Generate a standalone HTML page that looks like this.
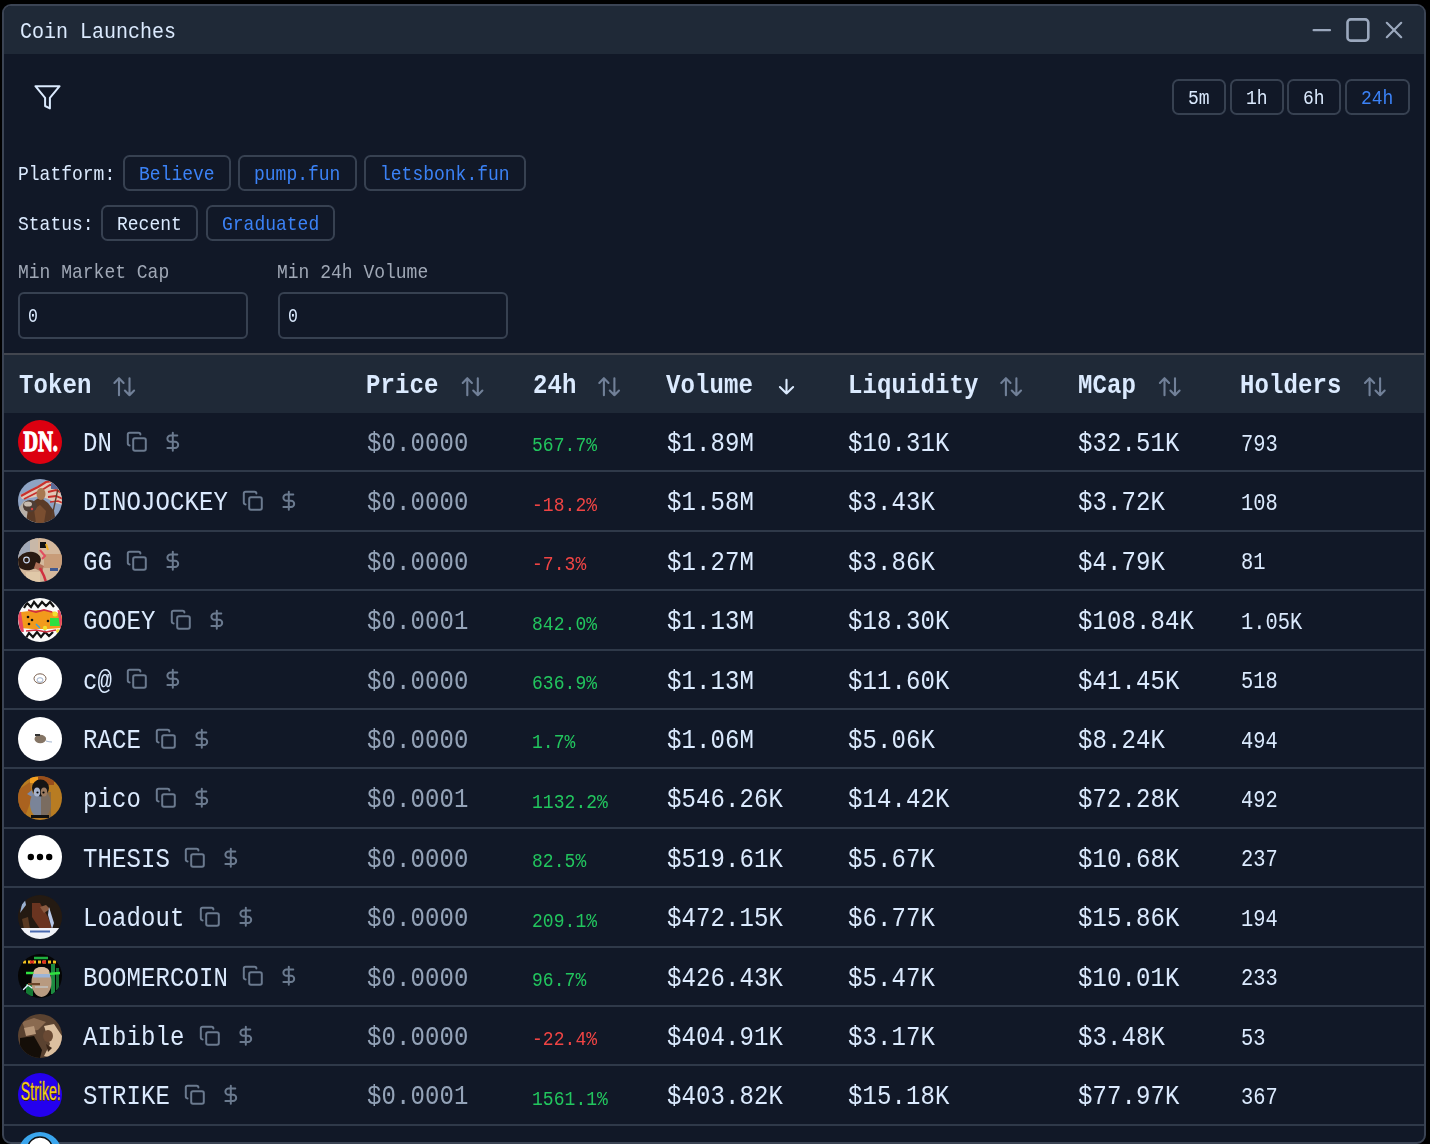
<!DOCTYPE html>
<html><head><meta charset="utf-8"><title>Coin Launches</title>
<style>
html,body{margin:0;padding:0}
body{width:1430px;height:1144px;background:#000;position:relative;overflow:hidden;font-family:"Liberation Mono",monospace}
.win{position:absolute;left:2px;top:4px;width:1420px;height:1136px;border:2px solid #3b4454;border-radius:9px;background:#111827;overflow:hidden}
.bar{position:absolute;left:0;top:0;width:100%;height:48px;background:#1f2937}
.abs{position:absolute}
.t{position:absolute;white-space:pre;line-height:1;transform-origin:0 76.61%;will-change:transform}
.btn{position:absolute;box-sizing:border-box;border:2px solid #374151;border-radius:6.5px}
.inp{position:absolute;box-sizing:border-box;border:2px solid #374151;border-radius:6px}

.av{position:absolute;width:44px;height:44px;border-radius:50%;overflow:hidden}
.av svg{display:block}

</style></head><body>
<div class="win"><div class="bar"></div></div>
<span class="t" style="left:19.90px;top:22.98px;font-size:20px;color:#dbeafe;transform:scaleY(1.13);">Coin Launches</span><svg class="abs" style="left:0;top:0" width="1430" height="60" viewBox="0 0 1430 60">
<g fill="none" stroke="#9ba8bd" stroke-linecap="round" stroke-linejoin="round">
<line x1="1313.6" y1="30.2" x2="1330" y2="30.2" stroke-width="2.2"/>
<rect x="1347.5" y="19.4" width="20.8" height="21.2" rx="3.2" stroke-width="2.6"/>
<line x1="1386.8" y1="22.8" x2="1401.2" y2="37.2" stroke-width="2.2"/>
<line x1="1401.2" y1="22.8" x2="1386.8" y2="37.2" stroke-width="2.2"/>
</g></svg><svg class="abs" style="left:0;top:60px" width="100" height="70" viewBox="0 60 100 70">
<path d="M59.6 86.2 H35.4 L45.1 97.9 V106 L49.9 108.4 V97.9 Z" fill="none" stroke="#dbeafe" stroke-width="2" stroke-linejoin="round"/>
</svg><div class="btn" style="left:1172px;top:79px;width:54px;height:36px;"></div><span class="t" style="left:1188.20px;top:90.41px;font-size:18px;color:#dbeafe;transform:scaleY(1.13);">5m</span><div class="btn" style="left:1230px;top:79px;width:54px;height:36px;"></div><span class="t" style="left:1246.20px;top:90.41px;font-size:18px;color:#dbeafe;transform:scaleY(1.13);">1h</span><div class="btn" style="left:1287.2px;top:79px;width:53.6px;height:36px;"></div><span class="t" style="left:1303.20px;top:90.41px;font-size:18px;color:#dbeafe;transform:scaleY(1.13);">6h</span><div class="btn" style="left:1345px;top:79px;width:65px;height:36px;"></div><span class="t" style="left:1361.30px;top:90.41px;font-size:18px;color:#3b82f6;transform:scaleY(1.13);">24h</span><span class="t" style="left:18.00px;top:166.11px;font-size:18px;color:#dbeafe;transform:scaleY(1.13);">Platform:</span><div class="btn" style="left:123px;top:155px;width:107.6px;height:36px;"></div><span class="t" style="left:139.00px;top:165.71px;font-size:18px;color:#3b82f6;transform:scaleY(1.13);">Believe</span><div class="btn" style="left:238px;top:155px;width:118.8px;height:36px;"></div><span class="t" style="left:254.20px;top:165.71px;font-size:18px;color:#3b82f6;transform:scaleY(1.13);">pump.fun</span><div class="btn" style="left:364.4px;top:155px;width:161.6px;height:36px;"></div><span class="t" style="left:380.40px;top:165.71px;font-size:18px;color:#3b82f6;transform:scaleY(1.13);">letsbonk.fun</span><span class="t" style="left:18.00px;top:215.81px;font-size:18px;color:#dbeafe;transform:scaleY(1.13);">Status:</span><div class="btn" style="left:101.2px;top:205px;width:96.6px;height:36px;"></div><span class="t" style="left:117.10px;top:215.81px;font-size:18px;color:#dbeafe;transform:scaleY(1.13);">Recent</span><div class="btn" style="left:206px;top:205px;width:129px;height:36px;"></div><span class="t" style="left:221.90px;top:215.81px;font-size:18px;color:#3b82f6;transform:scaleY(1.13);">Graduated</span><span class="t" style="left:18.00px;top:264.01px;font-size:18px;color:#a0a8b6;transform:scaleY(1.13);">Min Market Cap</span><span class="t" style="left:277.00px;top:264.01px;font-size:18px;color:#a0a8b6;transform:scaleY(1.13);">Min 24h Volume</span><div class="inp" style="left:18px;top:292px;width:230px;height:47px"></div><div class="inp" style="left:278px;top:292px;width:230px;height:47px"></div><span class="t" style="left:28.30px;top:310.36px;font-size:16.5px;color:#dbeafe;transform:scaleY(1.28);">0</span><span class="t" style="left:287.70px;top:310.36px;font-size:16.5px;color:#dbeafe;transform:scaleY(1.28);">0</span><div class="abs" style="left:4px;top:353px;width:1420px;height:2px;background:#42464f"></div><div class="abs" style="left:4px;top:355px;width:1420px;height:58px;background:#1f2937"></div><span class="t" style="left:18.50px;top:374.81px;font-size:24px;color:#dbeafe;font-weight:bold;letter-spacing:0.1px;transform:scaleY(1.13);">Token</span><span class="t" style="left:365.90px;top:374.81px;font-size:24px;color:#dbeafe;font-weight:bold;letter-spacing:0.1px;transform:scaleY(1.13);">Price</span><span class="t" style="left:533.00px;top:374.81px;font-size:24px;color:#dbeafe;font-weight:bold;letter-spacing:0.1px;transform:scaleY(1.13);">24h</span><span class="t" style="left:665.70px;top:374.81px;font-size:24px;color:#dbeafe;font-weight:bold;letter-spacing:0.1px;transform:scaleY(1.13);">Volume</span><span class="t" style="left:847.50px;top:374.81px;font-size:24px;color:#dbeafe;font-weight:bold;letter-spacing:0.1px;transform:scaleY(1.13);">Liquidity</span><span class="t" style="left:1077.60px;top:374.81px;font-size:24px;color:#dbeafe;font-weight:bold;letter-spacing:0.1px;transform:scaleY(1.13);">MCap</span><span class="t" style="left:1240.10px;top:374.81px;font-size:24px;color:#dbeafe;font-weight:bold;letter-spacing:0.1px;transform:scaleY(1.13);">Holders</span><svg class="abs" style="left:0;top:360px" width="1430" height="50" viewBox="0 360 1430 50"><g fill="none" stroke="#718098" stroke-width="2.1" stroke-linecap="round" stroke-linejoin="round"><path d="M114.40 382.9 L119.00 378.2 L123.60 382.9 M119.00 378.2 V395.2 M124.90 390.5 L129.50 395.2 L134.10 390.5 M129.50 395.2 V378.2"/><path d="M462.70 382.9 L467.30 378.2 L471.90 382.9 M467.30 378.2 V395.2 M473.20 390.5 L477.80 395.2 L482.40 390.5 M477.80 395.2 V378.2"/><path d="M599.30 382.9 L603.90 378.2 L608.50 382.9 M603.90 378.2 V395.2 M609.80 390.5 L614.40 395.2 L619.00 390.5 M614.40 395.2 V378.2"/><path d="M1001.30 382.9 L1005.90 378.2 L1010.50 382.9 M1005.90 378.2 V395.2 M1011.80 390.5 L1016.40 395.2 L1021.00 390.5 M1016.40 395.2 V378.2"/><path d="M1159.90 382.9 L1164.50 378.2 L1169.10 382.9 M1164.50 378.2 V395.2 M1170.40 390.5 L1175.00 395.2 L1179.60 390.5 M1175.00 395.2 V378.2"/><path d="M1365.00 382.9 L1369.60 378.2 L1374.20 382.9 M1369.60 378.2 V395.2 M1375.50 390.5 L1380.10 395.2 L1384.70 390.5 M1380.10 395.2 V378.2"/></g><path d="M786.5 379.9 V393.5 M779.9 387.1 L786.5 393.5 L793.1 387.1" fill="none" stroke="#dbeafe" stroke-width="2.1" stroke-linecap="round" stroke-linejoin="round"/></svg><div class="abs" style="left:4px;top:470.40px;width:1420px;height:2px;background:#2f3949"></div><div class="av av-dn" style="left:18px;top:419.50px"><svg width="44" height="44" viewBox="0 0 44 44"><rect width="44" height="44" fill="#dc0010"/><text x="5.6" y="31.1" font-family="Liberation Serif" font-weight="bold" font-size="28.5" fill="#fff" stroke="#fff" stroke-width="1.4" textLength="34.2" lengthAdjust="spacingAndGlyphs">DN.</text></svg></div><span class="t" style="left:82.60px;top:432.91px;font-size:24px;color:#dbeafe;letter-spacing:0.1px;transform:scaleY(1.13);">DN</span><svg class="abs" style="left:126.00px;top:430.70px" width="21.6" height="21.6" viewBox="0 0 24 24" fill="none" stroke="#6b7a8f" stroke-width="2.2" stroke-linecap="round" stroke-linejoin="round"><rect width="14" height="14" x="8" y="8" rx="2" ry="2"/><path d="M4 16c-1.1 0-2-.9-2-2V4c0-1.1.9-2 2-2h10c1.1 0 2 .9 2 2"/></svg><svg class="abs" style="left:162.00px;top:430.70px" width="21.6" height="21.6" viewBox="0 0 24 24" fill="none" stroke="#6b7a8f" stroke-width="2.2" stroke-linecap="round" stroke-linejoin="round"><line x1="12" x2="12" y1="2" y2="22"/><path d="M17 5H9.5a3.5 3.5 0 0 0 0 7h5a3.5 3.5 0 0 1 0 7H6"/></svg><span class="t" style="left:366.60px;top:432.91px;font-size:24px;color:#94a3b8;letter-spacing:0.1px;transform:scaleY(1.13);">$0.0000</span><span class="t" style="left:532.40px;top:437.31px;font-size:18px;color:#22c55e;letter-spacing:0.05px;transform:scaleY(1.1);">567.7%</span><span class="t" style="left:666.70px;top:432.91px;font-size:24px;color:#dbeafe;letter-spacing:0.1px;transform:scaleY(1.13);">$1.89M</span><span class="t" style="left:847.70px;top:432.91px;font-size:24px;color:#dbeafe;letter-spacing:0.1px;transform:scaleY(1.13);">$10.31K</span><span class="t" style="left:1078.30px;top:432.91px;font-size:24px;color:#dbeafe;letter-spacing:0.1px;transform:scaleY(1.13);">$32.51K</span><span class="t" style="left:1240.60px;top:435.67px;font-size:20.4px;color:#dbeafe;letter-spacing:0.0px;transform:scaleY(1.13);">793</span><div class="abs" style="left:4px;top:529.80px;width:1420px;height:2px;background:#2f3949"></div><div class="av av-dino" style="left:18px;top:478.90px"><svg width="44" height="44" viewBox="0 0 44 44"><rect width="44" height="44" fill="#8ea3c4"/><path d="M0 30 L6 22 L14 24 L20 30 L24 44 L0 44 Z" fill="#b8b0a8"/>
<path d="M2 16 L10 12 L18 8 L26 3 L34 1 L40 5 L45 9 L45 26 L38 24 L30 20 L22 17 L12 19 L4 20 Z" fill="#e0c8b8"/>
<path d="M3 17 L12 12 L20 8 L28 3 L35 2" stroke="#c8302c" stroke-width="2.2" fill="none"/>
<path d="M6 20 L16 15 L24 11 L32 6 L38 6" stroke="#c8302c" stroke-width="1.8" fill="none"/>
<path d="M30 13 L38 11 L45 14" stroke="#c8302c" stroke-width="2" fill="none"/>
<path d="M30 18 L38 17 L45 20" stroke="#c8302c" stroke-width="1.8" fill="none"/>
<path d="M32 23 L40 22 L45 24" stroke="#c8302c" stroke-width="1.6" fill="none"/>
<rect x="33" y="4" width="8" height="6" fill="#5a6a98"/>
<path d="M8 44 L10 30 L16 22 L22 18 L30 24 L36 32 L38 44 Z" fill="#5a3a26"/>
<path d="M16 30 L22 26 L28 32 L26 44 L18 44 Z" fill="#7a4e30"/>
<ellipse cx="23" cy="15" rx="4.5" ry="6" fill="#a87850"/>
<ellipse cx="12" cy="27" rx="7" ry="6" fill="#4e3e36"/>
<ellipse cx="10" cy="25" rx="4" ry="2.6" fill="#c8bcb0"/>
<circle cx="14" cy="30" r="1.2" fill="#d04040"/>
<rect x="36" y="10" width="1.4" height="30" fill="#5a4030" transform="rotate(12 36 25)"/></svg></div><span class="t" style="left:82.60px;top:492.31px;font-size:24px;color:#dbeafe;letter-spacing:0.1px;transform:scaleY(1.13);">DINOJOCKEY</span><svg class="abs" style="left:242.00px;top:490.10px" width="21.6" height="21.6" viewBox="0 0 24 24" fill="none" stroke="#6b7a8f" stroke-width="2.2" stroke-linecap="round" stroke-linejoin="round"><rect width="14" height="14" x="8" y="8" rx="2" ry="2"/><path d="M4 16c-1.1 0-2-.9-2-2V4c0-1.1.9-2 2-2h10c1.1 0 2 .9 2 2"/></svg><svg class="abs" style="left:278.00px;top:490.10px" width="21.6" height="21.6" viewBox="0 0 24 24" fill="none" stroke="#6b7a8f" stroke-width="2.2" stroke-linecap="round" stroke-linejoin="round"><line x1="12" x2="12" y1="2" y2="22"/><path d="M17 5H9.5a3.5 3.5 0 0 0 0 7h5a3.5 3.5 0 0 1 0 7H6"/></svg><span class="t" style="left:366.60px;top:492.31px;font-size:24px;color:#94a3b8;letter-spacing:0.1px;transform:scaleY(1.13);">$0.0000</span><span class="t" style="left:532.40px;top:496.71px;font-size:18px;color:#ef4444;letter-spacing:0.05px;transform:scaleY(1.1);">-18.2%</span><span class="t" style="left:666.70px;top:492.31px;font-size:24px;color:#dbeafe;letter-spacing:0.1px;transform:scaleY(1.13);">$1.58M</span><span class="t" style="left:847.70px;top:492.31px;font-size:24px;color:#dbeafe;letter-spacing:0.1px;transform:scaleY(1.13);">$3.43K</span><span class="t" style="left:1078.30px;top:492.31px;font-size:24px;color:#dbeafe;letter-spacing:0.1px;transform:scaleY(1.13);">$3.72K</span><span class="t" style="left:1240.60px;top:495.07px;font-size:20.4px;color:#dbeafe;letter-spacing:0.0px;transform:scaleY(1.13);">108</span><div class="abs" style="left:4px;top:589.20px;width:1420px;height:2px;background:#2f3949"></div><div class="av av-gg" style="left:18px;top:538.30px"><svg width="44" height="44" viewBox="0 0 44 44"><rect width="44" height="44" fill="#d4b89c"/><rect x="0" y="0" width="12" height="20" fill="#a0a8b8"/>
<rect x="12" y="0" width="8" height="16" fill="#c8b8a8"/>
<rect x="26" y="16" width="18" height="14" fill="#c89c78"/>
<ellipse cx="11" cy="23" rx="12" ry="9" fill="#2a1a12" transform="rotate(-15 11 23)"/>
<circle cx="8.5" cy="22" r="2.8" fill="none" stroke="#c8d6ee" stroke-width="1.2"/>
<path d="M18 24 L26 28 L24 34 L16 30 Z" fill="#b07058"/>
<rect x="22" y="4" width="6" height="6" fill="#101010"/>
<path d="M28 6 L30 12" stroke="#f0b020" stroke-width="2"/>
<path d="M22 12 L27 18 L24 21" stroke="#e05060" stroke-width="2" fill="none"/>
<path d="M22 30 L26 38 L28 44" stroke="#d03040" stroke-width="2.5" fill="none"/>
<rect x="32" y="30" width="8" height="3" fill="#405890"/>
<rect x="8" y="34" width="14" height="10" fill="#e0c8a8"/></svg></div><span class="t" style="left:82.60px;top:551.71px;font-size:24px;color:#dbeafe;letter-spacing:0.1px;transform:scaleY(1.13);">GG</span><svg class="abs" style="left:126.00px;top:549.50px" width="21.6" height="21.6" viewBox="0 0 24 24" fill="none" stroke="#6b7a8f" stroke-width="2.2" stroke-linecap="round" stroke-linejoin="round"><rect width="14" height="14" x="8" y="8" rx="2" ry="2"/><path d="M4 16c-1.1 0-2-.9-2-2V4c0-1.1.9-2 2-2h10c1.1 0 2 .9 2 2"/></svg><svg class="abs" style="left:162.00px;top:549.50px" width="21.6" height="21.6" viewBox="0 0 24 24" fill="none" stroke="#6b7a8f" stroke-width="2.2" stroke-linecap="round" stroke-linejoin="round"><line x1="12" x2="12" y1="2" y2="22"/><path d="M17 5H9.5a3.5 3.5 0 0 0 0 7h5a3.5 3.5 0 0 1 0 7H6"/></svg><span class="t" style="left:366.60px;top:551.71px;font-size:24px;color:#94a3b8;letter-spacing:0.1px;transform:scaleY(1.13);">$0.0000</span><span class="t" style="left:532.40px;top:556.11px;font-size:18px;color:#ef4444;letter-spacing:0.05px;transform:scaleY(1.1);">-7.3%</span><span class="t" style="left:666.70px;top:551.71px;font-size:24px;color:#dbeafe;letter-spacing:0.1px;transform:scaleY(1.13);">$1.27M</span><span class="t" style="left:847.70px;top:551.71px;font-size:24px;color:#dbeafe;letter-spacing:0.1px;transform:scaleY(1.13);">$3.86K</span><span class="t" style="left:1078.30px;top:551.71px;font-size:24px;color:#dbeafe;letter-spacing:0.1px;transform:scaleY(1.13);">$4.79K</span><span class="t" style="left:1240.60px;top:554.47px;font-size:20.4px;color:#dbeafe;letter-spacing:0.0px;transform:scaleY(1.13);">81</span><div class="abs" style="left:4px;top:648.60px;width:1420px;height:2px;background:#2f3949"></div><div class="av av-gooey" style="left:18px;top:597.70px"><svg width="44" height="44" viewBox="0 0 44 44"><rect width="44" height="44" fill="#fafafa"/><path d="M3 14 L20 12 L38 14 L44 18 L44 30 L30 31 L14 31 L2 30 Z" fill="#f29a1c"/>
<rect x="32" y="20" width="11" height="8" fill="#2ee040"/>
<path d="M1 14 L4 34" stroke="#e84860" stroke-width="4"/>
<path d="M41 12 L44 32" stroke="#e84860" stroke-width="3"/>
<circle cx="37" cy="16" r="2.5" fill="#f0e030"/>
<circle cx="27" cy="30" r="2.2" fill="#f0e030"/>
<circle cx="40" cy="33" r="2" fill="#f0e030"/>
<path d="M6 10 L9 5 L13 9 L16 4 L20 9 L24 4 L28 8 L32 4 L36 9" stroke="#111" stroke-width="2.2" fill="none"/>
<path d="M8 40 L11 35 L15 39 L19 34 L23 39 L27 34 L31 38 L35 34" stroke="#111" stroke-width="2.2" fill="none"/>
<path d="M10 12 L18 14 L26 12 L34 14" stroke="#d03040" stroke-width="1.8" fill="none"/>
<path d="M8 33 L18 32 L28 34 L38 32" stroke="#d03040" stroke-width="1.6" fill="none"/>
<path d="M18 26 L22 30" stroke="#30a0f0" stroke-width="1.5"/>
<circle cx="10" cy="19" r="1.3" fill="#111"/><circle cx="14" cy="22" r="1.3" fill="#111"/><circle cx="11" cy="26" r="1.3" fill="#111"/><circle cx="30" cy="23" r="1.3" fill="#111"/></svg></div><span class="t" style="left:82.60px;top:611.11px;font-size:24px;color:#dbeafe;letter-spacing:0.1px;transform:scaleY(1.13);">GOOEY</span><svg class="abs" style="left:169.50px;top:608.90px" width="21.6" height="21.6" viewBox="0 0 24 24" fill="none" stroke="#6b7a8f" stroke-width="2.2" stroke-linecap="round" stroke-linejoin="round"><rect width="14" height="14" x="8" y="8" rx="2" ry="2"/><path d="M4 16c-1.1 0-2-.9-2-2V4c0-1.1.9-2 2-2h10c1.1 0 2 .9 2 2"/></svg><svg class="abs" style="left:205.50px;top:608.90px" width="21.6" height="21.6" viewBox="0 0 24 24" fill="none" stroke="#6b7a8f" stroke-width="2.2" stroke-linecap="round" stroke-linejoin="round"><line x1="12" x2="12" y1="2" y2="22"/><path d="M17 5H9.5a3.5 3.5 0 0 0 0 7h5a3.5 3.5 0 0 1 0 7H6"/></svg><span class="t" style="left:366.60px;top:611.11px;font-size:24px;color:#94a3b8;letter-spacing:0.1px;transform:scaleY(1.13);">$0.0001</span><span class="t" style="left:532.40px;top:615.51px;font-size:18px;color:#22c55e;letter-spacing:0.05px;transform:scaleY(1.1);">842.0%</span><span class="t" style="left:666.70px;top:611.11px;font-size:24px;color:#dbeafe;letter-spacing:0.1px;transform:scaleY(1.13);">$1.13M</span><span class="t" style="left:847.70px;top:611.11px;font-size:24px;color:#dbeafe;letter-spacing:0.1px;transform:scaleY(1.13);">$18.30K</span><span class="t" style="left:1078.30px;top:611.11px;font-size:24px;color:#dbeafe;letter-spacing:0.1px;transform:scaleY(1.13);">$108.84K</span><span class="t" style="left:1240.60px;top:613.87px;font-size:20.4px;color:#dbeafe;letter-spacing:0.0px;transform:scaleY(1.13);">1.05K</span><div class="abs" style="left:4px;top:708.00px;width:1420px;height:2px;background:#2f3949"></div><div class="av av-cat" style="left:18px;top:657.10px"><svg width="44" height="44" viewBox="0 0 44 44"><rect width="44" height="44" fill="#ffffff"/><ellipse cx="22" cy="21.6" rx="6" ry="4.8" fill="none" stroke="#7a6050" stroke-width="1"/><ellipse cx="22" cy="23" rx="3" ry="2.3" fill="none" stroke="#8aa0c0" stroke-width="0.8"/></svg></div><span class="t" style="left:82.60px;top:670.51px;font-size:24px;color:#dbeafe;letter-spacing:0.1px;transform:scaleY(1.13);">c@</span><svg class="abs" style="left:126.00px;top:668.30px" width="21.6" height="21.6" viewBox="0 0 24 24" fill="none" stroke="#6b7a8f" stroke-width="2.2" stroke-linecap="round" stroke-linejoin="round"><rect width="14" height="14" x="8" y="8" rx="2" ry="2"/><path d="M4 16c-1.1 0-2-.9-2-2V4c0-1.1.9-2 2-2h10c1.1 0 2 .9 2 2"/></svg><svg class="abs" style="left:162.00px;top:668.30px" width="21.6" height="21.6" viewBox="0 0 24 24" fill="none" stroke="#6b7a8f" stroke-width="2.2" stroke-linecap="round" stroke-linejoin="round"><line x1="12" x2="12" y1="2" y2="22"/><path d="M17 5H9.5a3.5 3.5 0 0 0 0 7h5a3.5 3.5 0 0 1 0 7H6"/></svg><span class="t" style="left:366.60px;top:670.51px;font-size:24px;color:#94a3b8;letter-spacing:0.1px;transform:scaleY(1.13);">$0.0000</span><span class="t" style="left:532.40px;top:674.91px;font-size:18px;color:#22c55e;letter-spacing:0.05px;transform:scaleY(1.1);">636.9%</span><span class="t" style="left:666.70px;top:670.51px;font-size:24px;color:#dbeafe;letter-spacing:0.1px;transform:scaleY(1.13);">$1.13M</span><span class="t" style="left:847.70px;top:670.51px;font-size:24px;color:#dbeafe;letter-spacing:0.1px;transform:scaleY(1.13);">$11.60K</span><span class="t" style="left:1078.30px;top:670.51px;font-size:24px;color:#dbeafe;letter-spacing:0.1px;transform:scaleY(1.13);">$41.45K</span><span class="t" style="left:1240.60px;top:673.27px;font-size:20.4px;color:#dbeafe;letter-spacing:0.0px;transform:scaleY(1.13);">518</span><div class="abs" style="left:4px;top:767.40px;width:1420px;height:2px;background:#2f3949"></div><div class="av av-race" style="left:18px;top:716.50px"><svg width="44" height="44" viewBox="0 0 44 44"><rect width="44" height="44" fill="#ffffff"/><ellipse cx="22.3" cy="22" rx="5.8" ry="4.2" fill="#857565"/><rect x="17" y="17" width="5" height="2" fill="#333"/><path d="M28 24 Q31 25 34 25" stroke="#8aa0c0" stroke-width="0.8" fill="none"/></svg></div><span class="t" style="left:82.60px;top:729.91px;font-size:24px;color:#dbeafe;letter-spacing:0.1px;transform:scaleY(1.13);">RACE</span><svg class="abs" style="left:155.00px;top:727.70px" width="21.6" height="21.6" viewBox="0 0 24 24" fill="none" stroke="#6b7a8f" stroke-width="2.2" stroke-linecap="round" stroke-linejoin="round"><rect width="14" height="14" x="8" y="8" rx="2" ry="2"/><path d="M4 16c-1.1 0-2-.9-2-2V4c0-1.1.9-2 2-2h10c1.1 0 2 .9 2 2"/></svg><svg class="abs" style="left:191.00px;top:727.70px" width="21.6" height="21.6" viewBox="0 0 24 24" fill="none" stroke="#6b7a8f" stroke-width="2.2" stroke-linecap="round" stroke-linejoin="round"><line x1="12" x2="12" y1="2" y2="22"/><path d="M17 5H9.5a3.5 3.5 0 0 0 0 7h5a3.5 3.5 0 0 1 0 7H6"/></svg><span class="t" style="left:366.60px;top:729.91px;font-size:24px;color:#94a3b8;letter-spacing:0.1px;transform:scaleY(1.13);">$0.0000</span><span class="t" style="left:532.40px;top:734.31px;font-size:18px;color:#22c55e;letter-spacing:0.05px;transform:scaleY(1.1);">1.7%</span><span class="t" style="left:666.70px;top:729.91px;font-size:24px;color:#dbeafe;letter-spacing:0.1px;transform:scaleY(1.13);">$1.06M</span><span class="t" style="left:847.70px;top:729.91px;font-size:24px;color:#dbeafe;letter-spacing:0.1px;transform:scaleY(1.13);">$5.06K</span><span class="t" style="left:1078.30px;top:729.91px;font-size:24px;color:#dbeafe;letter-spacing:0.1px;transform:scaleY(1.13);">$8.24K</span><span class="t" style="left:1240.60px;top:732.67px;font-size:20.4px;color:#dbeafe;letter-spacing:0.0px;transform:scaleY(1.13);">494</span><div class="abs" style="left:4px;top:826.80px;width:1420px;height:2px;background:#2f3949"></div><div class="av av-pico" style="left:18px;top:775.90px"><svg width="44" height="44" viewBox="0 0 44 44"><rect width="44" height="44" fill="#b87c22"/><path d="M0 14 L12 6 L14 22 L8 38 L0 36 Z" fill="#a0521e" opacity="0.6"/>
<rect x="12" y="1" width="8" height="6" fill="#f4a020"/>
<path d="M20 0 H36 V9 H20 Z" fill="#8a3a18" opacity="0.7"/>
<path d="M9 18 L14 14 L16 22 Z" fill="#7c8aa8"/>
<ellipse cx="22.5" cy="28" rx="10.5" ry="14" fill="#7a8498"/>
<path d="M23 16 H33 V42 H23 Z" fill="#7a6248" opacity="0.7"/>
<ellipse cx="22.5" cy="12" rx="8.5" ry="8.5" fill="#141414"/>
<ellipse cx="19" cy="16" rx="3.2" ry="4.5" fill="#a8b4cc"/>
<ellipse cx="26" cy="16" rx="3.2" ry="4.5" fill="#9a7a60"/>
<circle cx="19.5" cy="16.5" r="1.1" fill="#000"/><circle cx="25.5" cy="16.5" r="1.1" fill="#000"/>
<rect x="13" y="39" width="18" height="3" fill="#111"/></svg></div><span class="t" style="left:82.60px;top:789.31px;font-size:24px;color:#dbeafe;letter-spacing:0.1px;transform:scaleY(1.13);">pico</span><svg class="abs" style="left:155.00px;top:787.10px" width="21.6" height="21.6" viewBox="0 0 24 24" fill="none" stroke="#6b7a8f" stroke-width="2.2" stroke-linecap="round" stroke-linejoin="round"><rect width="14" height="14" x="8" y="8" rx="2" ry="2"/><path d="M4 16c-1.1 0-2-.9-2-2V4c0-1.1.9-2 2-2h10c1.1 0 2 .9 2 2"/></svg><svg class="abs" style="left:191.00px;top:787.10px" width="21.6" height="21.6" viewBox="0 0 24 24" fill="none" stroke="#6b7a8f" stroke-width="2.2" stroke-linecap="round" stroke-linejoin="round"><line x1="12" x2="12" y1="2" y2="22"/><path d="M17 5H9.5a3.5 3.5 0 0 0 0 7h5a3.5 3.5 0 0 1 0 7H6"/></svg><span class="t" style="left:366.60px;top:789.31px;font-size:24px;color:#94a3b8;letter-spacing:0.1px;transform:scaleY(1.13);">$0.0001</span><span class="t" style="left:532.40px;top:793.71px;font-size:18px;color:#22c55e;letter-spacing:0.05px;transform:scaleY(1.1);">1132.2%</span><span class="t" style="left:666.70px;top:789.31px;font-size:24px;color:#dbeafe;letter-spacing:0.1px;transform:scaleY(1.13);">$546.26K</span><span class="t" style="left:847.70px;top:789.31px;font-size:24px;color:#dbeafe;letter-spacing:0.1px;transform:scaleY(1.13);">$14.42K</span><span class="t" style="left:1078.30px;top:789.31px;font-size:24px;color:#dbeafe;letter-spacing:0.1px;transform:scaleY(1.13);">$72.28K</span><span class="t" style="left:1240.60px;top:792.07px;font-size:20.4px;color:#dbeafe;letter-spacing:0.0px;transform:scaleY(1.13);">492</span><div class="abs" style="left:4px;top:886.20px;width:1420px;height:2px;background:#2f3949"></div><div class="av av-thesis" style="left:18px;top:835.30px"><svg width="44" height="44" viewBox="0 0 44 44"><rect width="44" height="44" fill="#ffffff"/><circle cx="12.8" cy="22" r="3.2" fill="#000"/><circle cx="22" cy="22" r="3.2" fill="#000"/><circle cx="31.2" cy="22" r="3.2" fill="#000"/></svg></div><span class="t" style="left:82.60px;top:848.71px;font-size:24px;color:#dbeafe;letter-spacing:0.1px;transform:scaleY(1.13);">THESIS</span><svg class="abs" style="left:184.00px;top:846.50px" width="21.6" height="21.6" viewBox="0 0 24 24" fill="none" stroke="#6b7a8f" stroke-width="2.2" stroke-linecap="round" stroke-linejoin="round"><rect width="14" height="14" x="8" y="8" rx="2" ry="2"/><path d="M4 16c-1.1 0-2-.9-2-2V4c0-1.1.9-2 2-2h10c1.1 0 2 .9 2 2"/></svg><svg class="abs" style="left:220.00px;top:846.50px" width="21.6" height="21.6" viewBox="0 0 24 24" fill="none" stroke="#6b7a8f" stroke-width="2.2" stroke-linecap="round" stroke-linejoin="round"><line x1="12" x2="12" y1="2" y2="22"/><path d="M17 5H9.5a3.5 3.5 0 0 0 0 7h5a3.5 3.5 0 0 1 0 7H6"/></svg><span class="t" style="left:366.60px;top:848.71px;font-size:24px;color:#94a3b8;letter-spacing:0.1px;transform:scaleY(1.13);">$0.0000</span><span class="t" style="left:532.40px;top:853.11px;font-size:18px;color:#22c55e;letter-spacing:0.05px;transform:scaleY(1.1);">82.5%</span><span class="t" style="left:666.70px;top:848.71px;font-size:24px;color:#dbeafe;letter-spacing:0.1px;transform:scaleY(1.13);">$519.61K</span><span class="t" style="left:847.70px;top:848.71px;font-size:24px;color:#dbeafe;letter-spacing:0.1px;transform:scaleY(1.13);">$5.67K</span><span class="t" style="left:1078.30px;top:848.71px;font-size:24px;color:#dbeafe;letter-spacing:0.1px;transform:scaleY(1.13);">$10.68K</span><span class="t" style="left:1240.60px;top:851.47px;font-size:20.4px;color:#dbeafe;letter-spacing:0.0px;transform:scaleY(1.13);">237</span><div class="abs" style="left:4px;top:945.60px;width:1420px;height:2px;background:#2f3949"></div><div class="av av-loadout" style="left:18px;top:894.70px"><svg width="44" height="44" viewBox="0 0 44 44"><rect width="44" height="44" fill="#241a12"/><path d="M6 0 L2 18 L8 10 Z" fill="#9ab0d0"/>
<path d="M14 8 L22 8 L30 22 L34 34 L22 34 L14 22 Z" fill="#6a3420"/>
<path d="M22 12 L28 10 L32 14 L26 18 Z" fill="#8a5a40"/>
<path d="M31 12 L36 28 L34 34 L30 20 Z" fill="#b8c8e8"/>
<path d="M4 24 L10 22 L12 34 L6 34 Z" fill="#5a3a22"/>
<rect x="0" y="33" width="44" height="11" fill="#f0f2f8"/>
<rect x="12" y="35.5" width="20" height="2" fill="#4a6ab0"/></svg></div><span class="t" style="left:82.60px;top:908.11px;font-size:24px;color:#dbeafe;letter-spacing:0.1px;transform:scaleY(1.13);">Loadout</span><svg class="abs" style="left:198.50px;top:905.90px" width="21.6" height="21.6" viewBox="0 0 24 24" fill="none" stroke="#6b7a8f" stroke-width="2.2" stroke-linecap="round" stroke-linejoin="round"><rect width="14" height="14" x="8" y="8" rx="2" ry="2"/><path d="M4 16c-1.1 0-2-.9-2-2V4c0-1.1.9-2 2-2h10c1.1 0 2 .9 2 2"/></svg><svg class="abs" style="left:234.50px;top:905.90px" width="21.6" height="21.6" viewBox="0 0 24 24" fill="none" stroke="#6b7a8f" stroke-width="2.2" stroke-linecap="round" stroke-linejoin="round"><line x1="12" x2="12" y1="2" y2="22"/><path d="M17 5H9.5a3.5 3.5 0 0 0 0 7h5a3.5 3.5 0 0 1 0 7H6"/></svg><span class="t" style="left:366.60px;top:908.11px;font-size:24px;color:#94a3b8;letter-spacing:0.1px;transform:scaleY(1.13);">$0.0000</span><span class="t" style="left:532.40px;top:912.51px;font-size:18px;color:#22c55e;letter-spacing:0.05px;transform:scaleY(1.1);">209.1%</span><span class="t" style="left:666.70px;top:908.11px;font-size:24px;color:#dbeafe;letter-spacing:0.1px;transform:scaleY(1.13);">$472.15K</span><span class="t" style="left:847.70px;top:908.11px;font-size:24px;color:#dbeafe;letter-spacing:0.1px;transform:scaleY(1.13);">$6.77K</span><span class="t" style="left:1078.30px;top:908.11px;font-size:24px;color:#dbeafe;letter-spacing:0.1px;transform:scaleY(1.13);">$15.86K</span><span class="t" style="left:1240.60px;top:910.87px;font-size:20.4px;color:#dbeafe;letter-spacing:0.0px;transform:scaleY(1.13);">194</span><div class="abs" style="left:4px;top:1005.00px;width:1420px;height:2px;background:#2f3949"></div><div class="av av-boomer" style="left:18px;top:954.10px"><svg width="44" height="44" viewBox="0 0 44 44"><rect width="44" height="44" fill="#050505"/><rect x="33" y="10" width="4" height="30" fill="#1c8a40"/>
<rect x="38" y="14" width="3" height="22" fill="#137030"/>
<rect x="8" y="30" width="7" height="12" fill="#137a34"/>
<path d="M16 4 H30" stroke="#20b040" stroke-width="2.5"/>
<path d="M5 8 H39" stroke="#f0c020" stroke-width="3" stroke-dasharray="3 2"/>
<path d="M12 8 H16 M24 8 H28" stroke="#e03020" stroke-width="3"/>
<path d="M8 19 L17 19 M30 20 L42 19" stroke="#30e040" stroke-width="2.5"/>
<path d="M5 36 L10 31 L14 34 L17 32" stroke="#e0f0ff" stroke-width="1.4" fill="none"/>
<ellipse cx="23.5" cy="28" rx="10" ry="15" fill="#b89a80"/>
<ellipse cx="23.5" cy="18" rx="8" ry="5" fill="#d8bca0"/>
<rect x="15" y="20" width="17" height="3.5" fill="#9ab4d8"/>
<rect x="10" y="29" width="12" height="2.2" fill="#6a4428"/>
<path d="M17 33 H30" stroke="#c0b8b0" stroke-width="2"/></svg></div><span class="t" style="left:82.60px;top:967.51px;font-size:24px;color:#dbeafe;letter-spacing:0.1px;transform:scaleY(1.13);">BOOMERCOIN</span><svg class="abs" style="left:242.00px;top:965.30px" width="21.6" height="21.6" viewBox="0 0 24 24" fill="none" stroke="#6b7a8f" stroke-width="2.2" stroke-linecap="round" stroke-linejoin="round"><rect width="14" height="14" x="8" y="8" rx="2" ry="2"/><path d="M4 16c-1.1 0-2-.9-2-2V4c0-1.1.9-2 2-2h10c1.1 0 2 .9 2 2"/></svg><svg class="abs" style="left:278.00px;top:965.30px" width="21.6" height="21.6" viewBox="0 0 24 24" fill="none" stroke="#6b7a8f" stroke-width="2.2" stroke-linecap="round" stroke-linejoin="round"><line x1="12" x2="12" y1="2" y2="22"/><path d="M17 5H9.5a3.5 3.5 0 0 0 0 7h5a3.5 3.5 0 0 1 0 7H6"/></svg><span class="t" style="left:366.60px;top:967.51px;font-size:24px;color:#94a3b8;letter-spacing:0.1px;transform:scaleY(1.13);">$0.0000</span><span class="t" style="left:532.40px;top:971.91px;font-size:18px;color:#22c55e;letter-spacing:0.05px;transform:scaleY(1.1);">96.7%</span><span class="t" style="left:666.70px;top:967.51px;font-size:24px;color:#dbeafe;letter-spacing:0.1px;transform:scaleY(1.13);">$426.43K</span><span class="t" style="left:847.70px;top:967.51px;font-size:24px;color:#dbeafe;letter-spacing:0.1px;transform:scaleY(1.13);">$5.47K</span><span class="t" style="left:1078.30px;top:967.51px;font-size:24px;color:#dbeafe;letter-spacing:0.1px;transform:scaleY(1.13);">$10.01K</span><span class="t" style="left:1240.60px;top:970.27px;font-size:20.4px;color:#dbeafe;letter-spacing:0.0px;transform:scaleY(1.13);">233</span><div class="abs" style="left:4px;top:1064.40px;width:1420px;height:2px;background:#2f3949"></div><div class="av av-aibible" style="left:18px;top:1013.50px"><svg width="44" height="44" viewBox="0 0 44 44"><rect width="44" height="44" fill="#5a4230"/><path d="M4 8 L16 4 L28 8 L20 16 L8 18 Z" fill="#8a6a50"/>
<path d="M6 14 L16 12 L18 20 L8 22 Z" fill="#b8987a"/>
<path d="M2 24 L16 22 L24 36 L22 44 L2 44 Z" fill="#140e08"/>
<path d="M26 12 L36 10 L44 22 L44 36 L34 44 L26 42 L32 30 Z" fill="#dcc0a0"/>
<ellipse cx="30" cy="22" rx="5" ry="6" fill="#6a4a34"/>
<path d="M28 30 L34 34 L30 38 Z" fill="#3a2618"/></svg></div><span class="t" style="left:82.60px;top:1026.91px;font-size:24px;color:#dbeafe;letter-spacing:0.1px;transform:scaleY(1.13);">AIbible</span><svg class="abs" style="left:198.50px;top:1024.70px" width="21.6" height="21.6" viewBox="0 0 24 24" fill="none" stroke="#6b7a8f" stroke-width="2.2" stroke-linecap="round" stroke-linejoin="round"><rect width="14" height="14" x="8" y="8" rx="2" ry="2"/><path d="M4 16c-1.1 0-2-.9-2-2V4c0-1.1.9-2 2-2h10c1.1 0 2 .9 2 2"/></svg><svg class="abs" style="left:234.50px;top:1024.70px" width="21.6" height="21.6" viewBox="0 0 24 24" fill="none" stroke="#6b7a8f" stroke-width="2.2" stroke-linecap="round" stroke-linejoin="round"><line x1="12" x2="12" y1="2" y2="22"/><path d="M17 5H9.5a3.5 3.5 0 0 0 0 7h5a3.5 3.5 0 0 1 0 7H6"/></svg><span class="t" style="left:366.60px;top:1026.91px;font-size:24px;color:#94a3b8;letter-spacing:0.1px;transform:scaleY(1.13);">$0.0000</span><span class="t" style="left:532.40px;top:1031.31px;font-size:18px;color:#ef4444;letter-spacing:0.05px;transform:scaleY(1.1);">-22.4%</span><span class="t" style="left:666.70px;top:1026.91px;font-size:24px;color:#dbeafe;letter-spacing:0.1px;transform:scaleY(1.13);">$404.91K</span><span class="t" style="left:847.70px;top:1026.91px;font-size:24px;color:#dbeafe;letter-spacing:0.1px;transform:scaleY(1.13);">$3.17K</span><span class="t" style="left:1078.30px;top:1026.91px;font-size:24px;color:#dbeafe;letter-spacing:0.1px;transform:scaleY(1.13);">$3.48K</span><span class="t" style="left:1240.60px;top:1029.67px;font-size:20.4px;color:#dbeafe;letter-spacing:0.0px;transform:scaleY(1.13);">53</span><div class="abs" style="left:4px;top:1123.80px;width:1420px;height:2px;background:#2f3949"></div><div class="av av-strike" style="left:18px;top:1072.90px"><svg width="44" height="44" viewBox="0 0 44 44"><rect width="44" height="44" fill="#2400ee"/><g transform="translate(0 -0.6) translate(0 27.8) scale(1 1.42) translate(0 -27.8)"><text x="3.4" y="28.4" font-family="Liberation Sans" font-size="18" fill="#2a1a00" textLength="40" lengthAdjust="spacingAndGlyphs">Strike!</text><text x="2.8" y="27.8" font-family="Liberation Sans" font-size="18" fill="#f4e020" stroke="#d88a10" stroke-width="0.3" textLength="40" lengthAdjust="spacingAndGlyphs">Strike!</text></g></svg></div><span class="t" style="left:82.60px;top:1086.31px;font-size:24px;color:#dbeafe;letter-spacing:0.1px;transform:scaleY(1.13);">STRIKE</span><svg class="abs" style="left:184.00px;top:1084.10px" width="21.6" height="21.6" viewBox="0 0 24 24" fill="none" stroke="#6b7a8f" stroke-width="2.2" stroke-linecap="round" stroke-linejoin="round"><rect width="14" height="14" x="8" y="8" rx="2" ry="2"/><path d="M4 16c-1.1 0-2-.9-2-2V4c0-1.1.9-2 2-2h10c1.1 0 2 .9 2 2"/></svg><svg class="abs" style="left:220.00px;top:1084.10px" width="21.6" height="21.6" viewBox="0 0 24 24" fill="none" stroke="#6b7a8f" stroke-width="2.2" stroke-linecap="round" stroke-linejoin="round"><line x1="12" x2="12" y1="2" y2="22"/><path d="M17 5H9.5a3.5 3.5 0 0 0 0 7h5a3.5 3.5 0 0 1 0 7H6"/></svg><span class="t" style="left:366.60px;top:1086.31px;font-size:24px;color:#94a3b8;letter-spacing:0.1px;transform:scaleY(1.13);">$0.0001</span><span class="t" style="left:532.40px;top:1090.71px;font-size:18px;color:#22c55e;letter-spacing:0.05px;transform:scaleY(1.1);">1561.1%</span><span class="t" style="left:666.70px;top:1086.31px;font-size:24px;color:#dbeafe;letter-spacing:0.1px;transform:scaleY(1.13);">$403.82K</span><span class="t" style="left:847.70px;top:1086.31px;font-size:24px;color:#dbeafe;letter-spacing:0.1px;transform:scaleY(1.13);">$15.18K</span><span class="t" style="left:1078.30px;top:1086.31px;font-size:24px;color:#dbeafe;letter-spacing:0.1px;transform:scaleY(1.13);">$77.97K</span><span class="t" style="left:1240.60px;top:1089.07px;font-size:20.4px;color:#dbeafe;letter-spacing:0.0px;transform:scaleY(1.13);">367</span><div class="av av-next" style="left:18px;top:1132.30px"><svg width="44" height="44" viewBox="0 0 44 44"><rect width="44" height="44" fill="#3aa6ee"/><ellipse cx="22" cy="16" rx="12" ry="11" fill="#ffffff" stroke="#111" stroke-width="1.5"/></svg></div>
</body></html>
